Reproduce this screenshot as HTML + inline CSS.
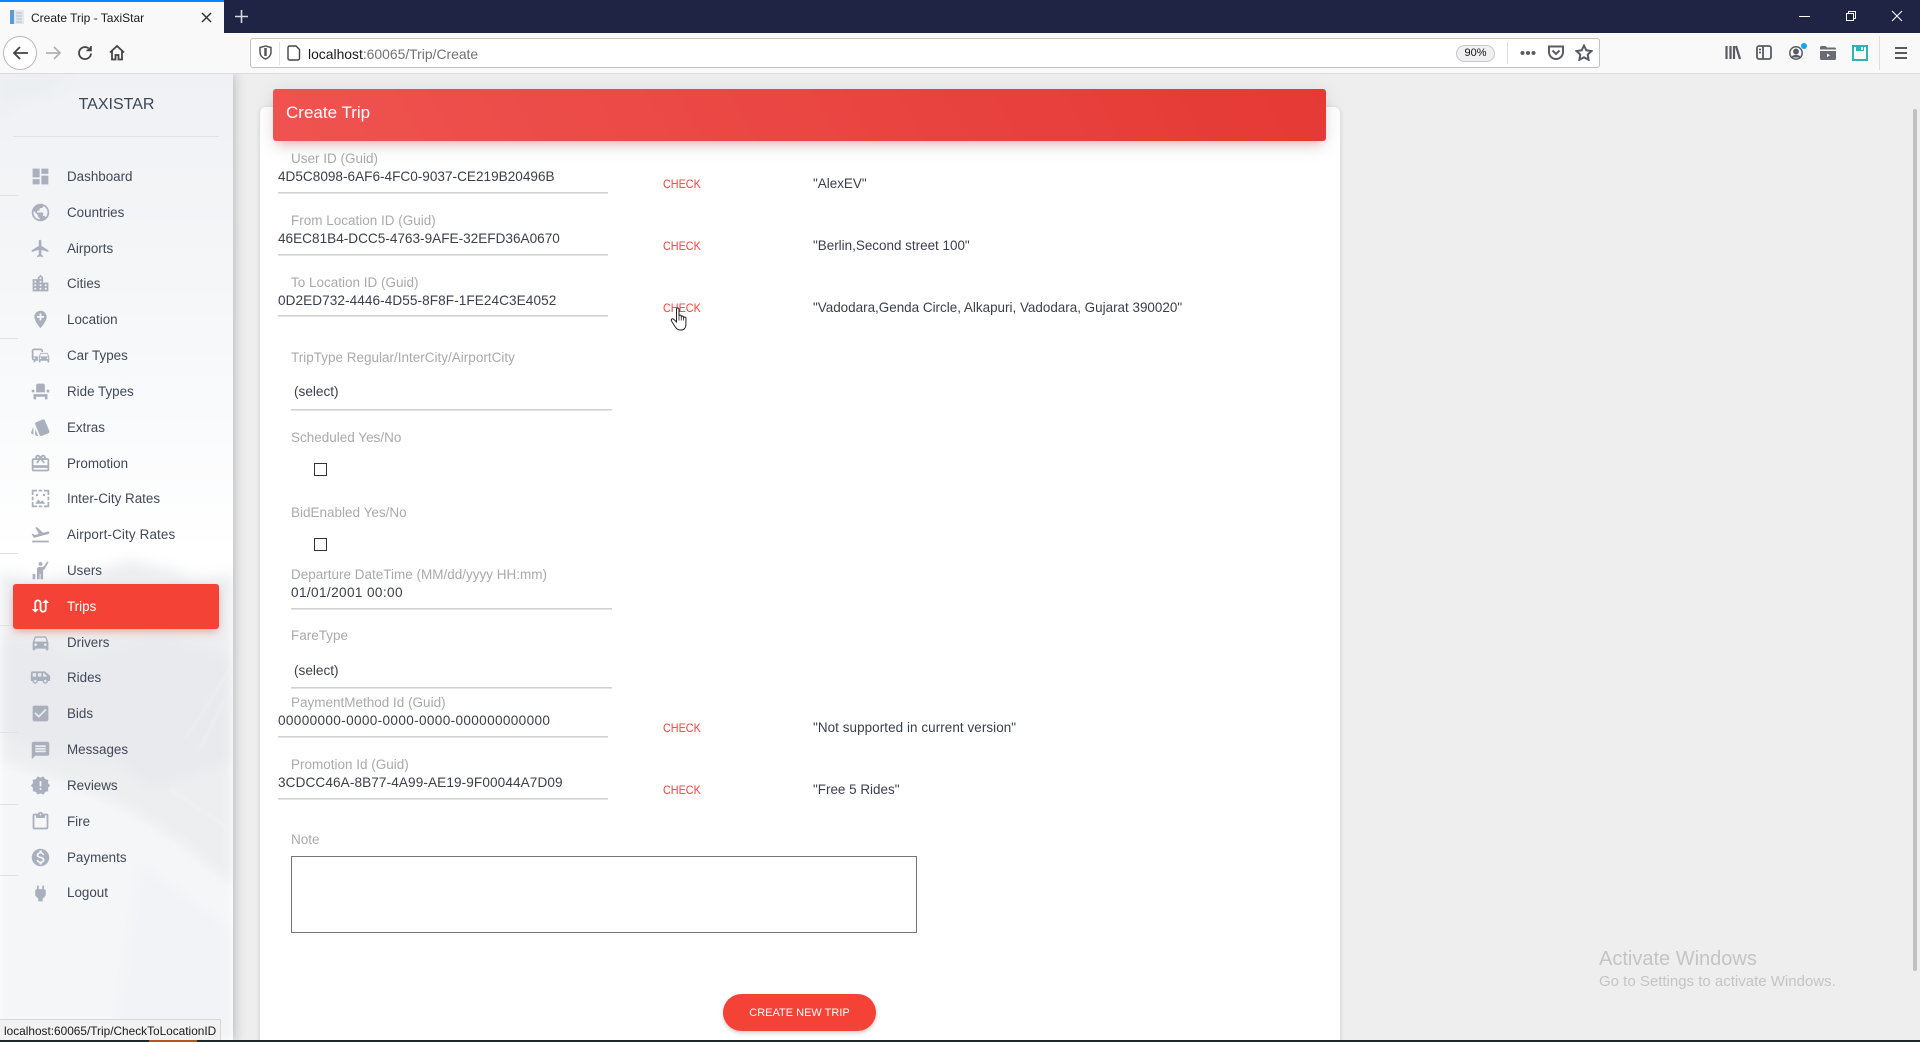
<!DOCTYPE html>
<html lang="en"><head><meta charset="utf-8"><title>Create Trip - TaxiStar</title>
<style>
html,body{margin:0;padding:0;width:1920px;height:1042px;overflow:hidden;background:#eee;font-family:"Liberation Sans",sans-serif}
#p{position:relative;width:1920px;height:1042px;overflow:hidden}
.a{position:absolute}
.t{position:absolute;white-space:nowrap}
.n{position:absolute;left:67px;font-size:13.4px;line-height:20px;color:#414858;white-space:nowrap}
.i{position:absolute;left:29.5px;width:21px;height:21px;fill:#a9afbc}
.sl{position:absolute;left:0;width:18px;height:1px;background:#dfe1e5}
.l{position:absolute;left:291px;font-size:13.5px;line-height:18px;color:#aaa;white-space:nowrap;margin-top:1px}
.v{position:absolute;font-size:13.6px;line-height:18px;color:#3a3f4a;white-space:nowrap}
.u{position:absolute;height:1px;background:#d2d2d2;box-shadow:0 1px 0 #e4e4e4}
.c{position:absolute;left:663px;font-size:12px;line-height:16px;color:#f44336;white-space:nowrap;transform:scaleX(.9);transform-origin:left center}
.r{position:absolute;left:813px;font-size:13.45px;line-height:18px;color:#3a3f4a;white-space:nowrap;margin-top:1px}
.cb{position:absolute;left:314px;width:11px;height:11px;border:1px solid #333;background:#fff}
.bi{position:absolute;fill:none;stroke:#5b5b66;stroke-width:1.8}
</style></head><body><div id="p">

<!-- title bar -->
<div class="a" style="left:0;top:0;width:1920px;height:33px;background:#1f2444"></div>
<div class="a" style="left:0;top:0;width:224px;height:33px;background:#f9f9fa"></div>
<div class="a" style="left:0;top:0;width:224px;height:2px;background:#0a84ff"></div>
<svg class="a" style="left:9px;top:9px" width="16" height="16" viewBox="0 0 16 16"><rect x="1" y="1" width="4" height="14" fill="#5b9bd5"/><rect x="5" y="1" width="10" height="14" fill="#e4e8ee"/><path d="M7 4h6M7 7h6M7 10h6M7 13h6" stroke="#b5bcc6" stroke-width="1"/></svg>
<div class="t" style="left:31px;top:10px;font-size:12px;line-height:16px;color:#1a1a1a">Create Trip - TaxiStar</div>
<svg class="a" style="left:201px;top:12px" width="11" height="11" viewBox="0 0 11 11"><path d="M1 1l9 9M10 1l-9 9" stroke="#333" stroke-width="1.5"/></svg>
<svg class="a" style="left:235px;top:10px" width="13" height="13" viewBox="0 0 13 13"><path d="M6.5 0v13M0 6.5h13" stroke="#d8d9e0" stroke-width="1.6"/></svg>
<svg class="a" style="left:1799px;top:10px" width="110" height="13" viewBox="0 0 110 13"><path d="M0 6.5h11" stroke="#fff" stroke-width="1"/><rect x="47.500" y="3.500" width="7" height="7" fill="none" stroke="#fff"/><path d="M49.500 3.500V1.500h7v7h-2" fill="none" stroke="#fff"/><path d="M93 1l10 10M103 1L93 11" stroke="#fff" stroke-width="1"/></svg>

<!-- toolbar -->
<div class="a" style="left:0;top:33px;width:1920px;height:40px;background:#f9f9fa;border-bottom:1px solid #dcdcde"></div>
<div class="a" style="left:3px;top:36px;width:32px;height:32px;border:1px solid #b9b9bb;border-radius:50%;background:#fff"></div>
<svg class="bi" style="left:12px;top:45px;stroke:#444" width="17" height="16" viewBox="0 0 17 16"><path d="M16 8H2M8 2L2 8l6 6"/></svg>
<svg class="bi" style="left:45px;top:45px;stroke:#b1b1b3" width="17" height="16" viewBox="0 0 17 16"><path d="M1 8h14M9 2l6 6-6 6"/></svg>
<svg class="bi" style="left:77px;top:45px;stroke:#444" width="16" height="16" viewBox="0 0 16 16"><path d="M14 8.500A6 6 0 1 1 11.500 3.200"/><path d="M14 1v5H9" fill="#444" stroke="none"/><path d="M14 1v4.500H9.500" stroke-width="1.600"/></svg>
<svg class="bi" style="left:109px;top:44px;stroke:#444" width="16" height="17" viewBox="0 0 16 17"><path d="M1 8.500L8 2l7 6.500M3 7v8.500h3.500V11h3v4.500H13V7"/></svg>

<div class="a" style="left:250px;top:38px;width:1348px;height:28px;background:#fff;border:1px solid #c2c2c4;border-radius:3px"></div>
<svg class="bi" style="left:259px;top:45px;stroke:#555;stroke-width:1.5" width="13" height="15" viewBox="0 0 13 15"><path d="M1 2.500L6.500 1 12 2.500V7c0 3.500-2.500 6-5.500 7C3.500 13 1 10.500 1 7z"/><path d="M6.500 3v8" stroke-width="2.500"/></svg>
<div class="a" style="left:279px;top:42px;width:1px;height:23px;background:#e2e2e4"></div>
<svg class="bi" style="left:287px;top:45px;stroke:#444;stroke-width:1.400" width="14" height="16" viewBox="0 0 14 16"><path d="M2.500 1H9l3.500 3.500V13.500a1.500 1.500 0 0 1-1.500 1.500H2.500A1.500 1.500 0 0 1 1 13.500v-11A1.500 1.500 0 0 1 2.500 1z"/></svg>
<div class="t" style="left:308px;top:45px;font-size:13.900px;line-height:18px;color:#1a1a1a">localhost<span style="color:#737373">:60065/Trip/Create</span></div>
<div class="a" style="left:1456px;top:45px;width:37px;height:15px;background:#f0f0f2;border:1px solid #c8c8ca;border-radius:9px;font-size:11px;line-height:15px;text-align:center;color:#111">90%</div>
<div class="a" style="left:1507px;top:42px;width:1px;height:22px;background:#dedee0"></div>
<svg class="a" style="left:1520px;top:50px" width="16" height="6" viewBox="0 0 16 6"><circle cx="2.500" cy="3" r="2" fill="#5b5b66"/><circle cx="8" cy="3" r="2" fill="#5b5b66"/><circle cx="13.500" cy="3" r="2" fill="#5b5b66"/></svg>
<svg class="bi" style="left:1548px;top:45px;stroke-width:2" width="16" height="15" viewBox="0 0 16 15"><path d="M1 1.500h14V7A7 7 0 0 1 1 7z"/><path d="M4.500 5.500L8 9l3.500-3.500"/></svg>
<svg class="bi" style="left:1575px;top:44px;stroke-width:2" width="18" height="17" viewBox="0 0 18 17"><path d="M9 1.500l2.300 4.800 5.200.7-3.800 3.600.9 5.200L9 13.300l-4.600 2.500.9-5.200L1.500 7l5.200-.7z"/></svg>
<svg class="bi" style="left:1725px;top:45px;stroke-width:2.200" width="16" height="15" viewBox="0 0 16 15"><path d="M1.500 1v13M5.500 1v13M9 1v13M11 1l4 13"/></svg>
<svg class="bi" style="left:1756px;top:45px;stroke-width:1.800" width="16" height="15" viewBox="0 0 16 15"><rect x="1" y="1" width="14" height="13" rx="2"/><path d="M7 1v13M3 4.500h2M3 7.500h2"/></svg>
<svg class="bi" style="left:1789px;top:46px;stroke-width:1.500" width="14" height="14" viewBox="0 0 14 14"><circle cx="7" cy="7" r="6.200"/><circle cx="7" cy="5.500" r="2.200" fill="#5b5b66"/><path d="M3 11.500c1-2.500 7-2.500 8 0" fill="#5b5b66"/></svg>
<div class="a" style="left:1801px;top:43px;width:6px;height:6px;border-radius:50%;background:#0ea5f0"></div>
<svg class="a" style="left:1820px;top:46px" width="16" height="14" viewBox="0 0 16 14"><path d="M1.500 0h4l1.500 1.500h7.500A1.500 1.500 0 0 1 16 3v.5H0V1.500A1.500 1.500 0 0 1 1.500 0zM0 5h16v7.500a1.500 1.500 0 0 1-1.500 1.500h-13A1.500 1.500 0 0 1 0 12.500z" fill="#6b6b74"/><path d="M7 7.500l3 1.800-3 1.800z" fill="#f9f9fa"/></svg>
<svg class="a" style="left:1852px;top:45px" width="16" height="16" viewBox="0 0 16 16"><path d="M1 1h14v14H1z" fill="none" stroke="#2fb3b8" stroke-width="2"/><rect x="4" y="1" width="8" height="5" fill="#2fb3b8"/><rect x="9" y="2" width="2" height="3" fill="#f9f9fa"/></svg>
<div class="a" style="left:1879px;top:36px;width:1px;height:34px;background:#dedee0"></div>
<svg class="a" style="left:1895px;top:47px" width="12" height="12" viewBox="0 0 12 12"><path d="M0 1h12M0 6h12M0 11h12" stroke="#444" stroke-width="1.800"/></svg>

<!-- content card -->
<div class="a" style="left:260px;top:107px;width:1080px;height:960px;background:#fff;border-radius:6px;box-shadow:0 1px 4px rgba(0,0,0,.16)"></div>
<div class="a" style="left:273px;top:89px;width:1053px;height:52px;border-radius:3px;background:linear-gradient(60deg,#ef5350,#e53935);box-shadow:0 4px 20px rgba(0,0,0,.10),0 7px 10px -5px rgba(244,67,54,.35)"></div>
<div class="t" style="left:286px;top:103px;font-size:17px;line-height:20px;color:#fff">Create Trip</div>

<div class="l" style="top:149px">User ID (Guid)</div>
<div class="v" style="left:278px;top:168px">4D5C8098-6AF6-4FC0-9037-CE219B20496B</div>
<div class="u" style="left:278px;top:192px;width:330px"></div>
<div class="c" style="top:176px">CHECK</div>
<div class="r" style="top:174px">"AlexEV"</div>

<div class="l" style="top:211px">From Location ID (Guid)</div>
<div class="v" style="left:278px;top:230px">46EC81B4-DCC5-4763-9AFE-32EFD36A0670</div>
<div class="u" style="left:278px;top:254px;width:330px"></div>
<div class="c" style="top:238px">CHECK</div>
<div class="r" style="top:236px">"Berlin,Second street 100"</div>

<div class="l" style="top:273px">To Location ID (Guid)</div>
<div class="v" style="left:278px;top:292px;letter-spacing:.07px">0D2ED732-4446-4D55-8F8F-1FE24C3E4052</div>
<div class="u" style="left:278px;top:315px;width:330px"></div>
<div class="c" style="top:300px">CHECK</div>
<div class="r" style="top:298px">"Vadodara,Genda Circle, Alkapuri, Vadodara, Gujarat 390020"</div>

<div class="l" style="top:348px">TripType Regular/InterCity/AirportCity</div>
<div class="v" style="left:294px;top:383px">(select)</div>
<div class="u" style="left:291px;top:409px;width:321px"></div>

<div class="l" style="top:428px">Scheduled Yes/No</div>
<div class="cb" style="top:463px"></div>
<div class="l" style="top:503px">BidEnabled Yes/No</div>
<div class="cb" style="top:538px"></div>

<div class="l" style="top:565px">Departure DateTime (MM/dd/yyyy HH:mm)</div>
<div class="v" style="left:291px;top:584px;letter-spacing:.38px">01/01/2001 00:00</div>
<div class="u" style="left:291px;top:608px;width:321px"></div>

<div class="l" style="top:626px">FareType</div>
<div class="v" style="left:294px;top:662px">(select)</div>
<div class="u" style="left:291px;top:687px;width:321px"></div>

<div class="l" style="top:693px">PaymentMethod Id (Guid)</div>
<div class="v" style="left:278px;top:712px;letter-spacing:.34px">00000000-0000-0000-0000-000000000000</div>
<div class="u" style="left:278px;top:736px;width:330px"></div>
<div class="c" style="top:720px">CHECK</div>
<div class="r" style="top:718px;letter-spacing:.07px">"Not supported in current version"</div>

<div class="l" style="top:755px">Promotion Id (Guid)</div>
<div class="v" style="left:278px;top:774px;letter-spacing:.1px">3CDCC46A-8B77-4A99-AE19-9F00044A7D09</div>
<div class="u" style="left:278px;top:798px;width:330px"></div>
<div class="c" style="top:782px">CHECK</div>
<div class="r" style="top:780px">"Free 5 Rides"</div>

<div class="l" style="top:830px">Note</div>
<div class="a" style="left:291px;top:856px;width:624px;height:75px;border:1px solid #767676;background:#fff"></div>

<div class="a" style="left:723px;top:994px;width:153px;height:37px;border-radius:19px;background:#f44336;box-shadow:0 2px 4px rgba(0,0,0,.2);color:#fff;font-size:11px;line-height:38px;text-align:center">CREATE NEW TRIP</div>

<!-- cursor -->
<svg class="a" style="left:670px;top:307px" width="20" height="24" viewBox="0 0 20 24"><path d="M6.500 2.200c0-1.600 2.500-1.600 2.500 0V9c0-1.200 2.300-1.200 2.300 0v1c0-1.200 2.300-1.200 2.300 0v1c0-1.200 2.300-1.200 2.300 0V18c0 3-2 5-4.500 5H10c-2.500 0-3.800-1.500-5-3.500L1.500 14c-1-1.700 1-3 2.300-1.600l2.700 2.600z" fill="#fff" stroke="#222" stroke-width="1"/><path d="M9 8.500v5M11.300 9.500v4M13.600 10.500v3" stroke="#222" stroke-width=".8"/></svg>

<!-- sidebar -->
<div class="a" style="left:0;top:74px;width:233px;height:968px;background:linear-gradient(180deg,#eff1f4 0,#f4f6f8 200px,#fff 480px);box-shadow:0 0 12px rgba(0,0,0,.28);clip-path:inset(0 -24px 0 0)">
<div class="a" style="left:0;top:0;width:233px;height:968px;overflow:hidden">
<svg class="a" style="left:0;top:0;filter:blur(6px)" width="233" height="968" viewBox="0 0 233 968">
<path d="M-20 0h90l-20 18-30 6-20 14-20 4z" fill="#e9ecf0" opacity=".6"/>
<path d="M-20 495L40 505 90 498 130 486 165 494 200 504 253 498V830L190 775 130 735 60 705 -20 680z" fill="#edeef0"/>
<path d="M-20 560L80 580 160 560 253 590V680L150 715 120 690 50 680 -20 650z" fill="#e9eaed"/>
<path d="M-20 680L60 705 130 735 190 775 253 830V990H-20z" fill="#f5f6f8"/>
<path d="M140 790L253 870V990H110z" fill="#f2f3f6"/>
</svg>
<svg class="a" style="left:0;top:0;filter:blur(1.500px)" width="233" height="968" viewBox="0 0 233 968">
<g stroke="#f6f6f8" stroke-width="1.500" fill="none" opacity=".7"><path d="M233 590L205 635 185 665"/><path d="M225 625L200 675"/><path d="M170 715L215 745 233 760"/></g>
</svg>
</div>
</div>
<div class="sl" style="top:195px"></div><div class="sl" style="top:338px"></div><div class="sl" style="top:553px"></div><div class="sl" style="top:625px"></div><div class="sl" style="top:732px"></div><div class="sl" style="top:804px"></div><div class="sl" style="top:875px"></div>
<div class="t" style="left:0;top:95px;width:233px;text-align:center;font-size:16px;line-height:20px;color:#3c4858">TAXISTAR</div>
<div class="a" style="left:13px;top:136px;width:206px;height:1px;background:#dfe1e5"></div>

<svg class="i" style="top:166px" viewBox="0 0 24 24"><path d="M3 13h8V3H3v10zm0 8h8v-6H3v6zm10 0h8V11h-8v10zm0-18v6h8V3h-8z"/></svg>
<div class="n" style="top:167px">Dashboard</div>
<svg class="i" style="top:202px" viewBox="0 0 24 24"><path d="M12 2C6.480 2 2 6.480 2 12s4.480 10 10 10 10-4.480 10-10S17.520 2 12 2zm-1 17.930c-3.950-.49-7-3.850-7-7.930 0-.62.080-1.210.21-1.790L9 15v1c0 1.100.9 2 2 2v1.930zm6.900-2.540c-.26-.81-1-1.390-1.900-1.390h-1v-3c0-.55-.45-1-1-1H8v-2h2c.55 0 1-.45 1-1V7h2c1.100 0 2-.9 2-2v-.41c2.930 1.190 5 4.060 5 7.410 0 2.080-.8 3.970-2.100 5.390z"/></svg>
<div class="n" style="top:203px">Countries</div>
<svg class="i" style="top:238px" viewBox="0 0 24 24"><path d="M21 16v-2l-8-5V3.500c0-.83-.67-1.500-1.500-1.500S10 2.670 10 3.500V9l-8 5v2l8-2.500V19l-2 1.500V22l3.500-1 3.500 1v-1.500L13 19v-5.500l8 2.500z"/></svg>
<div class="n" style="top:239px">Airports</div>
<svg class="i" style="top:273px" viewBox="0 0 24 24"><path d="M15 11V5l-3-3-3 3v2H3v14h18V11h-6zm-8 8H5v-2h2v2zm0-4H5v-2h2v2zm0-4H5V9h2v2zm6 8h-2v-2h2v2zm0-4h-2v-2h2v2zm0-4h-2V9h2v2zm0-4h-2V5h2v2zm6 12h-2v-2h2v2zm0-4h-2v-2h2v2z"/></svg>
<div class="n" style="top:274px">Cities</div>
<svg class="i" style="top:309px" viewBox="0 0 24 24"><path d="M12 2C8.140 2 5 5.140 5 9c0 5.250 7 13 7 13s7-7.750 7-13c0-3.860-3.140-7-7-7zm4 8h-3v3h-2v-3H8V8h3V5h2v3h3v2z"/></svg>
<div class="n" style="top:310px">Location</div>
<svg class="i" style="top:345px" viewBox="0 0 24 24"><path d="M12 4H5C3.340 4 2 5.340 2 7v8c0 1.660 1.340 3 3 3l-1 1v1h1l2-2.030L9 18v-5H4V5.980L13 6v2h2V7c0-1.660-1.340-3-3-3zM5 14c.55 0 1 .45 1 1s-.45 1-1 1-1-.45-1-1 .45-1 1-1zm15.570-4.340c-.14-.4-.52-.66-.97-.66h-7.190c-.46 0-.83.260-.98.660L10 13.770l.01 5.510c0 .38.310.72.690.72h.62c.38 0 .68-.38.68-.76V18h8v1.240c0 .38.310.76.690.76h.61c.38 0 .69-.34.69-.72l.01-1.370v-4.140l-1.430-4.110zm-8.160.34h7.190l1.030 3h-9.250l1.030-3zM12 16c-.55 0-1-.45-1-1s.45-1 1-1 1 .45 1 1-.45 1-1 1zm8 0c-.55 0-1-.45-1-1s.45-1 1-1 1 .45 1 1-.45 1-1 1z"/></svg>
<div class="n" style="top:346px">Car Types</div>
<svg class="i" style="top:381px" viewBox="0 0 24 24"><path d="M4 18v3h3v-3h10v3h3v-6H4zm15-8h3v3h-3zM2 10h3v3H2zm15 3H7V5c0-1.100.9-2 2-2h6c1.100 0 2 .9 2 2v8z"/></svg>
<div class="n" style="top:382px">Ride Types</div>
<svg class="i" style="top:417px" viewBox="0 0 24 24"><path d="M2.530 19.650l1.340.56v-9.030l-2.430 5.860c-.41 1.020.08 2.190 1.090 2.610zm19.500-3.700L17.070 3.980c-.31-.75-1.040-1.210-1.810-1.230-.26 0-.53.040-.79.150L7.100 5.950c-.75.310-1.210 1.030-1.230 1.800-.01.27.04.54.15.8l4.960 11.970c.31.76 1.050 1.220 1.830 1.230.26 0 .52-.05.77-.15l7.360-3.050c1.020-.42 1.510-1.590 1.090-2.600zM5.880 19.750c0 1.100.9 2 2 2h1.450l-3.450-8.340v6.340z"/></svg>
<div class="n" style="top:418px">Extras</div>
<svg class="i" style="top:453px" viewBox="0 0 24 24"><path d="M20 6h-2.180c.11-.31.18-.65.18-1 0-1.660-1.340-3-3-3-1.050 0-1.960.54-2.500 1.350l-.5.67-.5-.68C10.960 2.540 10.050 2 9 2 7.340 2 6 3.340 6 5c0 .35.07.69.18 1H4c-1.110 0-1.990.89-1.990 2L2 19c0 1.110.89 2 2 2h16c1.110 0 2-.89 2-2V8c0-1.110-.89-2-2-2zm-5-2c.55 0 1 .45 1 1s-.45 1-1 1-1-.45-1-1 .45-1 1-1zM9 4c.55 0 1 .45 1 1s-.45 1-1 1-1-.45-1-1 .45-1 1-1zm11 15H4v-2h16v2zm0-5H4V8h5.080L7 10.830 8.620 12 11 8.760l1-1.360 1 1.360L15.380 12 17 10.830 14.920 8H20v6z"/></svg>
<div class="n" style="top:454px">Promotion</div>
<svg class="i" style="top:488px" viewBox="0 0 24 24"><path d="M2 2h6v2H4v4H2zM16 2h6v6h-2V4h-4zM2 16h2v4h4v2H2zM20 16h2v6h-6v-2h4zM10 2h4v2h-4zM10 20h4v2h-4zM2 10h2v4H2zM20 10h2v4h-2zM6 18l3.500-5 2.500 3 2-2 3.500 4z"/><circle cx="8" cy="8" r="1.400"/><circle cx="16" cy="8" r="1.400"/></svg>
<div class="n" style="top:489px">Inter-City Rates</div>
<svg class="i" style="top:524px" viewBox="0 0 24 24"><path d="M2.500 19h19v2h-19zm19.570-9.360c-.21-.8-1.040-1.280-1.840-1.060L14.920 10l-6.900-6.430-1.930.51 4.140 7.170-4.970 1.330-1.970-1.540-1.450.39 1.820 3.160.77 1.330 1.600-.43 5.310-1.420 4.350-1.160L21 11.490c.81-.23 1.280-1.050 1.070-1.850z"/></svg>
<div class="n" style="top:525px;letter-spacing:.15px">Airport-City Rates</div>
<svg class="i" style="top:560px" viewBox="0 0 24 24"><circle cx="12" cy="4.500" r="2.200"/><path d="M19.500 1.500l1.700 1-4.200 7.500-2 1.500V22h-3v-6h-1v6h-3V10c0-1 1-2 2-2h4.500l2.500-2zM3 16h3v6H3z"/></svg>
<div class="n" style="top:561px">Users</div>

<div class="a" style="left:13px;top:584px;width:206px;height:45px;border-radius:3px;background:#f44336;box-shadow:0 4px 10px -2px rgba(244,67,54,.35),0 2px 6px rgba(0,0,0,.08)"></div>
<svg class="i" style="top:596px;fill:#fff" viewBox="0 0 24 24"><path d="M18 4l-4 4h3v7c0 1.100-.9 2-2 2s-2-.9-2-2V8c0-2.210-1.790-4-4-4S5 5.790 5 8v7H2l4 4 4-4H7V8c0-1.100.9-2 2-2s2 .9 2 2v7c0 2.210 1.790 4 4 4s4-1.790 4-4V8h3l-4-4z"/></svg>
<div class="n" style="top:597px;color:#fff">Trips</div>

<svg class="i" style="top:632px" viewBox="0 0 24 24"><path d="M18.920 6.010C18.720 5.420 18.160 5 17.500 5h-11c-.66 0-1.210.42-1.420 1.010L3 12v8c0 .55.45 1 1 1h1c.55 0 1-.45 1-1v-1h12v1c0 .55.45 1 1 1h1c.55 0 1-.45 1-1v-8l-2.080-5.990zM6.500 16c-.83 0-1.500-.67-1.500-1.500S5.670 13 6.500 13s1.500.67 1.500 1.500S7.330 16 6.500 16zm11 0c-.83 0-1.500-.67-1.500-1.500s.67-1.500 1.500-1.500 1.500.67 1.500 1.500-.67 1.500-1.500 1.500zM5 11l1.500-4.500h11L19 11H5z"/></svg>
<div class="n" style="top:633px">Drivers</div>
<svg class="i" style="top:667px" viewBox="0 0 24 24"><path d="M17 5H3c-1.100 0-2 .89-2 2v9h2c0 1.650 1.340 3 3 3s3-1.350 3-3h5.500c0 1.650 1.340 3 3 3s3-1.350 3-3H23v-6l-6-5zM3 11V7h4v4H3zm3 6.500c-.83 0-1.500-.67-1.500-1.500s.67-1.500 1.500-1.500 1.500.67 1.500 1.500-.67 1.500-1.500 1.500zm7-6.500H9V7h4v4zm4.500 6.500c-.83 0-1.500-.67-1.500-1.500s.67-1.500 1.500-1.500 1.500.67 1.500 1.500-.67 1.500-1.500 1.500zM15 11V7h1l4 4h-5z"/></svg>
<div class="n" style="top:668px">Rides</div>
<svg class="i" style="top:703px" viewBox="0 0 24 24"><path d="M19 3H5c-1.110 0-2 .9-2 2v14c0 1.100.89 2 2 2h14c1.110 0 2-.9 2-2V5c0-1.100-.89-2-2-2zm-9 14l-5-5 1.410-1.410L10 14.170l7.590-7.590L19 8l-9 9z"/></svg>
<div class="n" style="top:704px">Bids</div>
<svg class="i" style="top:740px" viewBox="0 0 24 24"><path d="M20 2H4c-1.100 0-1.990.9-1.990 2L2 22l4-4h14c1.100 0 2-.9 2-2V4c0-1.100-.9-2-2-2zm-2 12H6v-2h12v2zm0-3H6V9h12v2zm0-3H6V6h12v2z"/></svg>
<div class="n" style="top:740px">Messages</div>
<svg class="i" style="top:775px" viewBox="0 0 24 24"><path d="M23 12l-2.440-2.780.34-3.680-3.610-.82-1.890-3.180L12 3 8.600 1.540 6.710 4.720l-3.610.81.34 3.680L1 12l2.440 2.780-.34 3.690 3.610.82 1.890 3.180L12 21l3.400 1.460 1.890-3.180 3.610-.82-.34-3.680L23 12zm-10 5h-2v-2h2v2zm0-4h-2V7h2v6z"/></svg>
<div class="n" style="top:776px">Reviews</div>
<svg class="i" style="top:811px" viewBox="0 0 24 24"><path d="M19 3h-4.180C14.400 1.840 13.300 1 12 1c-1.300 0-2.400.84-2.820 2H5c-1.100 0-2 .9-2 2v14c0 1.100.9 2 2 2h14c1.100 0 2-.9 2-2V5c0-1.100-.9-2-2-2zm-7 0c.55 0 1 .45 1 1s-.45 1-1 1-1-.45-1-1 .45-1 1-1zm7 16H5V5h2v3h10V5h2v14z"/></svg>
<div class="n" style="top:812px">Fire</div>
<svg class="i" style="top:847px" viewBox="0 0 24 24"><path d="M12 2C6.480 2 2 6.480 2 12s4.480 10 10 10 10-4.480 10-10S17.520 2 12 2zm1.410 16.090V20h-2.670v-1.930c-1.710-.36-3.160-1.460-3.270-3.400h1.960c.1 1.050.82 1.870 2.650 1.870 1.960 0 2.400-.98 2.400-1.590 0-.83-.44-1.610-2.670-2.140-2.480-.6-4.180-1.620-4.180-3.670 0-1.720 1.390-2.840 3.110-3.210V4h2.670v1.950c1.860.45 2.790 1.860 2.850 3.390H14.300c-.05-1.110-.64-1.870-2.220-1.870-1.500 0-2.400.68-2.400 1.640 0 .84.65 1.390 2.670 1.910s4.180 1.390 4.180 3.910c-.01 1.830-1.380 2.830-3.120 3.160z"/></svg>
<div class="n" style="top:848px">Payments</div>
<svg class="i" style="top:883px" viewBox="0 0 24 24"><path d="M16.010 7L16 3h-2v4h-4V3H8v4h-.01C7 6.990 6 7.990 6 8.990v5.490L9.500 18v3h5v-3l3.500-3.510v-5.500c0-1-1-2-1.990-1.990z"/></svg>
<div class="n" style="top:883px">Logout</div>

<!-- status tooltip -->
<div class="a" style="left:0;top:1019px;width:216px;height:20px;background:#f2f2f2;border:1px solid #d8d8d8;border-left:0;font-size:11.850px;line-height:23px;color:#1a1a1a;padding-left:4px;white-space:nowrap;overflow:hidden">localhost:60065/Trip/CheckToLocationID</div>

<!-- windows watermark -->
<div class="t" style="left:1599px;top:947px;font-size:20px;line-height:24px;color:#c4c4c4">Activate Windows</div>
<div class="t" style="left:1599px;top:973px;font-size:15px;line-height:18px;color:#c4c4c4">Go to Settings to activate Windows.</div>

<!-- scrollbar -->
<div class="a" style="left:1913px;top:109px;width:4px;height:862px;background:#c1c1c1;border-radius:2px"></div>

<!-- bottom strip -->
<div class="a" style="left:0;top:1040px;width:1920px;height:2px;background:#1b2a2c"></div>
<div class="a" style="left:149px;top:1040px;width:48px;height:2px;background:#b5561e"></div>
</div></body></html>
